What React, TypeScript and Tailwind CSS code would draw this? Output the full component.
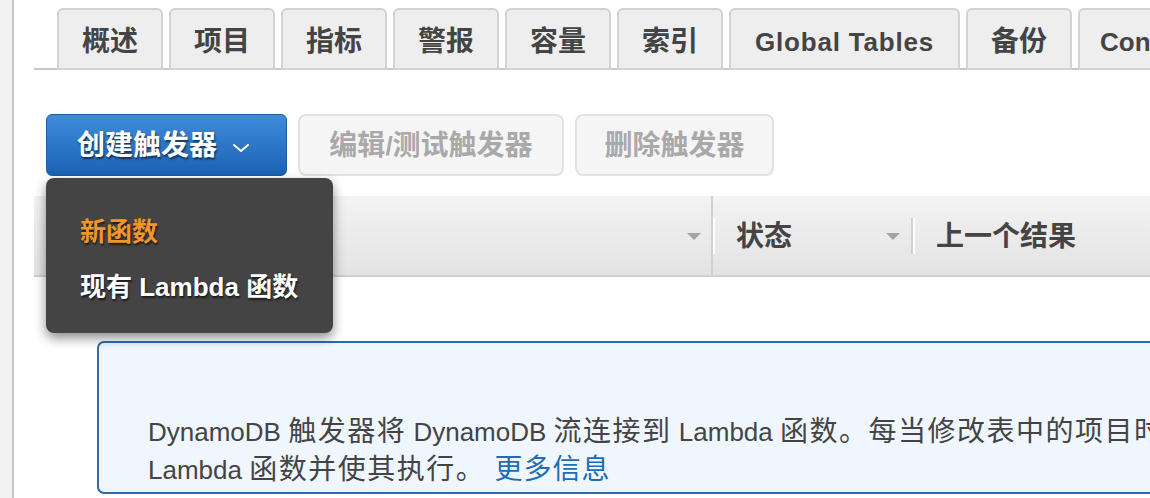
import React from "react";

const tabs = ["概述", "项目", "指标", "警报", "容量", "索引", "Global Tables", "备份", "Contributor Insights"];

// CJK glyphs in the screenshot run a little larger than the Latin text
function Mixed({ text, wide = false }: { text: string; wide?: boolean }) {
  const parts = text.split(/([\u3000-\u303f\u4e00-\u9fff\uff00-\uffef]+)/);
  return (
    <>
      {parts.map((part, i) =>
        i % 2 === 1 ? (
          <span key={i} className={wide ? "text-[28px] tracking-[1.5px]" : "text-[28px]"}>
            {part}
          </span>
        ) : (
          part
        ),
      )}
    </>
  );
}

function SortArrow() {
  return (
    <svg width="14" height="8" viewBox="0 0 14 8" className="shrink-0">
      <polygon points="0,0 14,0 7,7" fill="#a3a3a3" />
    </svg>
  );
}

function Chevron() {
  return (
    <svg width="18" height="10" viewBox="0 0 18 10" className="ml-[15px] mt-[4px]">
      <polyline points="2,2 9,8 16,2" fill="none" stroke="#ffffff" strokeWidth="2" strokeLinecap="round" strokeLinejoin="round" />
    </svg>
  );
}

export default function App() {
  return (
    <div className="relative flex h-[498px] w-[1150px] overflow-hidden bg-white font-['Liberation_Sans','Noto_Sans_CJK_SC',sans-serif] text-[26px] text-[#444]">
      <div className="h-full w-[14px] shrink-0 border-r-2 border-[#c6c6c6] bg-[#f2f2f2]" />

      <div className="w-[1400px] shrink-0 pl-[20px]">
        {/* tabs */}
        <div className="mt-[8px] flex gap-[6px] border-b-2 border-[#c8c8c8] pl-[23px]">
          {tabs.map((tab) => (
            <div
              key={tab}
              className={`-mb-[2px] flex h-[62px] min-w-[106px] items-center justify-center rounded-t-[6px] border-2 border-[#d2d2d2] bg-[#eeeeee] pt-[6px] font-bold text-[#444] ${
                tab === "Global Tables" ? "px-[24px] tracking-[0.8px]" : "px-[20px]"
              }`}
            >
              <Mixed text={tab} />
            </div>
          ))}
        </div>

        {/* action buttons */}
        <div className="mt-[44px] flex gap-[11px] pl-[12px]">
          <button className="flex h-[62px] w-[241px] items-center rounded-[6px] border border-[#1b5ca6] bg-gradient-to-b from-[#3f8cdb] to-[#1c62b4] pl-[30px] pt-[2px] text-[28px] font-bold text-white [text-shadow:1px_2px_2px_rgba(0,0,0,0.55)]">
            创建触发器
            <Chevron />
          </button>
          <button className="flex h-[62px] w-[266px] items-center justify-center rounded-[8px] border-2 border-[#e2e2e2] bg-[#f5f5f5] pt-[2px] font-bold text-[#a9a9a9]">
            <Mixed text="编辑/测试触发器" />
          </button>
          <button className="flex h-[62px] w-[199px] items-center justify-center rounded-[8px] border-2 border-[#e2e2e2] bg-[#f5f5f5] pt-[2px] text-[28px] font-bold text-[#a9a9a9]">
            删除触发器
          </button>
        </div>

        {/* table header */}
        <div className="mt-[20px] flex h-[81px] border-b-2 border-[#cfcfcf] bg-gradient-to-b from-[#f3f3f3] to-[#e3e3e3] text-[28px] font-bold">
          <div className="flex w-[679px] items-center justify-end border-r-2 border-[#d0d0d0] pr-[10px] pt-[2px]">
            <SortArrow />
          </div>
          <div className="flex w-[202px] items-center">
            <div className="h-[36px] w-[2px] bg-white" />
            <span className="ml-[21px] pt-[2px]">状态</span>
            <div className="ml-auto mr-[11px] pt-[2px]">
              <SortArrow />
            </div>
            <div className="flex h-[36px]">
              <div className="w-[2px] bg-[#d0d0d0]" />
              <div className="w-[2px] bg-white" />
            </div>
          </div>
          <div className="flex items-center pl-[21px] pt-[2px]">上一个结果</div>
        </div>

        {/* info box */}
        <div className="ml-[63px] mt-[64px] h-[153px] rounded-[7px] border-2 border-[#2b6bb0] bg-[#eff6fd] pl-[49px] pt-[70px] leading-[37px] text-[#444]">
          <Mixed wide text="DynamoDB 触发器将 DynamoDB 流连接到 Lambda 函数。每当修改表中的项目时，都会调用" />
          <br />
          <Mixed wide text="Lambda 函数并使其执行。 " />
          <span className="ml-[2px] text-[28px] tracking-[1px] text-[#1d6db5]">更多信息</span>
        </div>
      </div>

      {/* dropdown menu */}
      <div className="absolute left-[46px] top-[178px] flex h-[155px] w-[287px] flex-col gap-[19px] rounded-[8px] bg-[#444444] pl-[34px] pt-[36px] font-bold leading-[36px] shadow-[0_5px_12px_rgba(0,0,0,0.45)] [text-shadow:1px_2px_2px_rgba(0,0,0,0.6)]">
        <div className="text-[#f0962b]">新函数</div>
        <div className="text-white">现有 Lambda 函数</div>
      </div>
    </div>
  );
}
